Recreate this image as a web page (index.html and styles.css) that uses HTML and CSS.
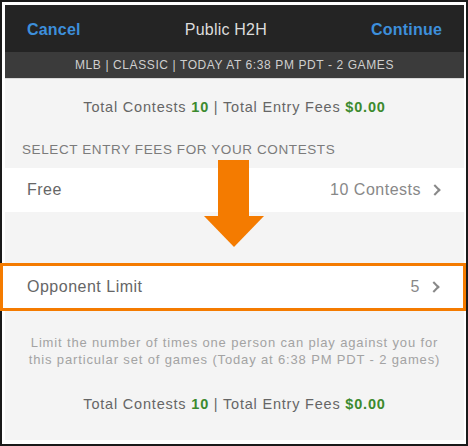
FILE: index.html
```html
<!DOCTYPE html>
<html lang="en">
<head>
<meta charset="UTF-8" />
<title>Public H2H</title>
<link rel="stylesheet" href="styles.css">
</head>
<body>
<div class="frame">
  <div class="screen">
    <header class="nav">
      <span class="nav-btn">Cancel</span>
      <span class="nav-title">Public H2H</span>
      <span class="nav-btn">Continue</span>
    </header>
    <div class="subnav">MLB | CLASSIC | TODAY AT 6:38 PM PDT - 2 GAMES</div>

    <div class="summary">
      Total Contests&nbsp;<b>10</b>&nbsp;| Total Entry Fees&nbsp;<b>$0.00</b>
    </div>
    <div class="section-title">SELECT ENTRY FEES FOR YOUR CONTESTS</div>
    <div class="row">
      <span class="label">Free</span>
      <span class="value">10 Contests <i class="chev"></i></span>
    </div>

    <div class="spacer"></div>

    <div class="row row-marked">
      <span class="label">Opponent Limit</span>
      <span class="value">5 <i class="chev"></i></span>
    </div>

    <p class="hint">Limit the number of times one person can play against you for this particular set of games (Today at 6:38 PM PDT - 2 games)</p>

    <div class="summary summary-bottom">
      Total Contests&nbsp;<b>10</b>&nbsp;| Total Entry Fees&nbsp;<b>$0.00</b>
    </div>

    <!-- annotation arrow -->
    <svg class="arrow" width="60" height="87" viewBox="0 0 60 87">
      <rect x="14" y="0" width="31" height="57" fill="#f47b00"/>
      <polygon points="0,56 60,56 30,87" fill="#f47b00"/>
    </svg>
  </div>
</div>
</body>
</html>
```

FILE: styles.css
```css
body {
  margin: 0;
  background: #fff;
  font-family: "Liberation Sans", Arial, sans-serif;
}

.frame {
  width: 468px;
  height: 446px;
  box-sizing: border-box;
  border: 2px solid #1a1a1a;
  padding: 3px 2px 3px 3px;
  background: #fff;
}

.screen {
  position: relative;
  height: 435px;
  background: #f4f4f4;
}

.nav {
  height: 47px;
  background: #242424;
  display: flex;
  align-items: center;
  justify-content: space-between;
  padding: 2px 22px 0;
  box-sizing: border-box;
  font-size: 16px;
  letter-spacing: 0.2px;
}

.nav-btn {
  color: #3d8fdb;
  font-weight: bold;
}

.nav-title {
  color: #dcdcdc;
}

.subnav {
  height: 26px;
  line-height: 27px;
  background: #3b3b3b;
  color: #cfcfcf;
  font-size: 12px;
  letter-spacing: 0.6px;
  text-align: center;
  border-bottom: 1px solid #d8d8d8;
}

.summary {
  height: 56px;
  display: flex;
  align-items: center;
  justify-content: center;
  color: #666;
  font-size: 14.5px;
  letter-spacing: 0.8px;
}

.summary b {
  color: #3c8a2e;
}

.section-title {
  height: 33px;
  line-height: 30px;
  padding-left: 17px;
  color: #7b7b7b;
  font-size: 13.5px;
  letter-spacing: 0.6px;
}

.row {
  height: 44px;
  background: #fff;
  display: flex;
  align-items: center;
  justify-content: space-between;
  padding: 0 22px;
  color: #666;
  font-size: 16px;
  letter-spacing: 0.5px;
}

.value {
  color: #888;
  display: flex;
  align-items: center;
  gap: 10px;
}

.chev {
  width: 6px;
  height: 6px;
  border-top: 2px solid #888;
  border-right: 2px solid #888;
  transform: rotate(45deg);
  margin-right: 3px;
}

.spacer {
  height: 51px;
}

.row-marked {
  height: 42px;
  margin: 0 -2px 0 -5px;
  border: 3px solid #f47b00;
  padding: 0 22px 0 24px;
}

.hint {
  margin: 0;
  padding: 23px 22px 0;
  color: #a3a3a3;
  font-size: 13px;
  letter-spacing: 0.85px;
  line-height: 17px;
  text-align: center;
}

.summary-bottom {
  height: 66px;
  padding-top: 6px;
  box-sizing: border-box;
}

.arrow {
  position: absolute;
  left: 199px;
  top: 155px;
}
```
